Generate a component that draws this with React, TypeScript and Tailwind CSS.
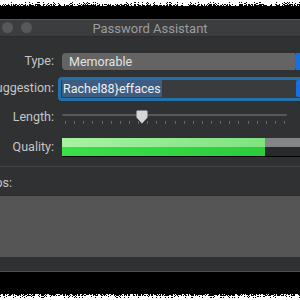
import React from "react";

// jagged scan edge at top and bottom of the screenshot
function NoiseEdge({ bottom = false }: { bottom?: boolean }) {
  let seed = bottom ? 31 : 7;
  const rnd = () => {
    seed = (seed * 9301 + 49297) % 233280;
    return seed / 233280;
  };
  const rects = [];
  for (let x = 0; x < 300; x++) {
    const h = 1 + Math.floor(rnd() * 3);
    const speck = rnd() > 0.6;
    rects.push(
      <rect key={x} x={x} y={bottom ? 0 : 7 - h} width={1} height={h} fill="#000" />
    );
    if (speck) {
      rects.push(
        <rect key={"s" + x} x={x} y={bottom ? h + 1 : 7 - h - 2} width={1} height={1} fill="#000" />
      );
    }
  }
  return (
    <svg width="300" height="7" className="block shrink-0 bg-white">
      {rects}
    </svg>
  );
}

function Slider() {
  const ticks = Array.from({ length: 25 }, (_, i) => i);
  return (
    <div className="relative h-[14px] w-[225px]">
      <div className="absolute left-0 right-0 top-[4px] h-[2px] rounded-full bg-[#57595b]" />
      <div className="absolute left-[3px] right-0 top-[11px] flex justify-between pr-[2px]">
        {ticks.map((t) => (
          <span key={t} className="block h-[3px] w-px bg-[#66686a]" />
        ))}
      </div>
      <svg className="absolute left-[74px] top-0" width="12" height="14" viewBox="0 0 12 14">
        <path d="M1.5 0.5 H10.5 A1 1 0 0 1 11.5 1.5 V7.5 L6 13.5 L0.5 7.5 V1.5 A1 1 0 0 1 1.5 0.5 Z" fill="#d6d6d6" />
      </svg>
    </div>
  );
}

export default function App() {
  return (
    <div
      className="w-[300px] h-[300px] overflow-hidden bg-black flex flex-col text-[12.5px]"
      style={{ fontFamily: "Roboto, 'Liberation Sans', sans-serif" }}
    >
      <NoiseEdge />
      <div className="h-[12px] shrink-0 bg-black" />

      {/* Window */}
      <div className="h-[253px] shrink-0 bg-[#2f3133] border-t border-[#56585a] border-b border-b-[#4c4e50] flex flex-col">
        {/* Title bar */}
        <div className="h-[17px] bg-[#3b3d3f] border-b border-[#2a2c2e] flex items-center relative">
          <div className="absolute left-[2px] top-[2px] flex gap-[8px]">
            <span className="w-[11px] h-[11px] rounded-full bg-[#56585a]" />
            <span className="w-[11px] h-[11px] rounded-full bg-[#56585a]" />
          </div>
          <div className="flex-1 text-center text-[#9c9c9c] leading-none text-[13px]">Password Assistant</div>
        </div>

        {/* Form */}
        <div className="grid grid-cols-[54px_1fr] gap-x-[8px] items-center text-[#c6c6c6] pt-[15px]">
          <div className="text-right whitespace-nowrap">Type:</div>
          <div className="flex h-[17px]">
            <div className="flex-1 rounded-l-[4px] bg-[#646464] text-[#e2e2e2] pl-[7px] leading-[17px]">Memorable</div>
            <div className="w-[5px] rounded-l-[2px] bg-[#1a6fe0]" />
          </div>

          <div className="whitespace-nowrap flex justify-end mt-[6px]">
            <span>Suggestion:</span>
          </div>
          <div className="flex h-[24px] mt-[6px] -ml-[4px]">
            <div className="flex-1 border-[3px] border-r-0 border-[#2470a8] rounded-l-[4px] bg-[#3a3b3d] flex items-center pl-[1px]">
              <span className="bg-[#3d5d82] text-[#f0f0f0] px-[1px] leading-[17px]">{"Rachel88}effaces"}</span>
              <span className="flex-1" />
              <span className="w-[4px] h-[17px] rounded-l-[2px] bg-[#1a6fe0]" />
            </div>
          </div>

          <div className="text-right whitespace-nowrap mt-[7px]">Length:</div>
          <div className="mt-[7px]">
            <Slider />
          </div>

          <div className="text-right whitespace-nowrap mt-[11px]">Quality:</div>
          <div className="mt-[11px] h-[19px] flex flex-col border-b border-black">
            <div className="flex h-[9px]">
              <div className="w-[203px] bg-gradient-to-r from-[#a6f2a2] to-[#7fe37f]" />
              <div className="flex-1 bg-[#858585]" />
            </div>
            <div className="flex flex-1">
              <div className="w-[203px] bg-gradient-to-r from-[#3be049] to-[#2ccc3d]" />
              <div className="flex-1 bg-[#292a2b]" />
            </div>
          </div>
        </div>

        <div className="h-px bg-[#414345] mt-[9px]" />

        <div className="text-[#c6c6c6] -ml-[15px] mt-[8px] leading-[16px]">Tips:</div>

        <div className="mt-[4px] h-[62px] bg-[#555555] border-t border-[#2a2c2e]" />
        <div className="flex-1" />
      </div>

      <div className="flex-1 bg-black" />
      <NoiseEdge bottom />
    </div>
  );
}
